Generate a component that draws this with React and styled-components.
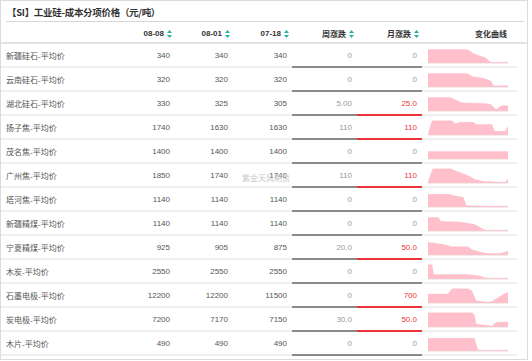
import React from 'react'
import styled, { createGlobalStyle } from 'styled-components'

const GlobalStyle = createGlobalStyle`
  body {
    margin: 0;
    background: #fff;
    font-family: "Liberation Sans", "Noto Sans CJK SC", sans-serif;
  }
`

const COLS = '119px 55px 58px 59px 65px 65px 95px'

const rows = [
  { name: '新疆硅石-平均价', a: '340', b: '340', c: '340', w: '0', m: '0', up: false,
    curve: [[0, .9], [.49, .9], [.58, .6], [.72, .35], [.78, .05], [1, .05]] },
  { name: '云南硅石-平均价', a: '320', b: '320', c: '320', w: '0', m: '0', up: false,
    curve: [[0, .9], [.49, .9], [.55, .7], [.68, .6], [.78, .42], [.82, .08], [1, .08]] },
  { name: '湖北硅石-平均价', a: '330', b: '325', c: '305', w: '5.00', m: '25.0', up: true,
    curve: [[0, .9], [.28, .9], [.42, .55], [.7, .5], [.78, .45], [.85, .1], [.92, .35], [1, .35]] },
  { name: '扬子焦-平均价', a: '1740', b: '1630', c: '1630', w: '110', m: '110', up: true,
    curve: [[0, .05], [.05, .95], [.3, .95], [.34, .75], [.4, .85], [.57, .85], [.6, .7], [.8, .7], [.83, .25], [.97, .25], [1, .6]] },
  { name: '茂名焦-平均价', a: '1400', b: '1400', c: '1400', w: '0', m: '0', up: false,
    curve: [[0, .5], [1, .5]] },
  { name: '广州焦-平均价', a: '1850', b: '1740', c: '1740', w: '110', m: '110', up: true,
    curve: [[0, .05], [.06, .95], [.28, .95], [.35, .8], [.5, .5], [.58, .25], [.7, .1], [.97, .05], [1, .3]] },
  { name: '塔河焦-平均价', a: '1140', b: '1140', c: '1140', w: '0', m: '0', up: false,
    curve: [[0, .85], [.27, .85], [.33, .75], [.44, .65], [.48, .08], [1, .05]] },
  { name: '新疆精煤-平均价', a: '1140', b: '1140', c: '1140', w: '0', m: '0', up: false,
    curve: [[0, .9], [.13, .9], [.16, .65], [.4, .6], [.58, .45], [.68, .15], [.72, .05], [1, .05]] },
  { name: '宁夏精煤-平均价', a: '925', b: '905', c: '875', w: '20.0', m: '50.0', up: true,
    curve: [[0, .85], [.2, .7], [.3, .55], [.5, .55], [.55, .35], [.65, .2], [.75, .1], [.9, .1], [1, .25]] },
  { name: '木炭-平均价', a: '2550', b: '2550', c: '2550', w: '0', m: '0', up: false,
    curve: [[0, .95], [.05, .95], [.07, .3], [.5, .3], [.65, .2], [.7, .1], [.75, .05], [1, .05]] },
  { name: '石墨电极-平均价', a: '12200', b: '12200', c: '11500', w: '0', m: '700', up: true,
    curve: [[0, .6], [.25, .6], [.3, .95], [.5, .95], [.55, .8], [.6, .15], [.75, .05], [.8, .1], [.95, .6], [1, .7]] },
  { name: '炭电极-平均价', a: '7200', b: '7170', c: '7150', w: '30.0', m: '50.0', up: true,
    curve: [[0, .95], [.55, .95], [.58, .8], [.6, .2], [.75, .1], [.8, .05], [.85, .3], [1, .35]] },
  { name: '木片-平均价', a: '490', b: '490', c: '490', w: '0', m: '0', up: false,
    curve: [[0, .85], [.58, .85], [.62, .1], [.65, .05], [1, .05]] },
]

function SortIcon() {
  return (
    <svg width="5" height="8" viewBox="0 0 5 8">
      <path d="M2.5 0 L5 3 L0 3 Z" fill="#27b3a3" />
      <path d="M2.5 8 L5 5 L0 5 Z" fill="#27b3a3" />
    </svg>
  )
}

function Spark({ points }) {
  const W = 80, H = 15
  const pts = points.map(([x, y]) => `${(x * W).toFixed(1)},${(H - y * H).toFixed(1)}`)
  const area = `0,${H} ${pts.join(' ')} ${W},${H}`
  return (
    <svg width={W} height={H + 1} viewBox={`0 0 ${W} ${H + 1}`}>
      <polygon points={area} fill="#ffc0cb" />
      <polyline points={pts.join(' ')} fill="none" stroke="#fbb3c0" strokeWidth="0.6" strokeDasharray="1 1" />
      <line x1="0" y1={H + 0.5} x2={W} y2={H + 0.5} stroke="#eee" strokeWidth="1" />
    </svg>
  )
}

function App() {
  return (
    <>
      <GlobalStyle />
      <Frame>
        <Title>【SI】工业硅-成本分项价格（元/吨）</Title>
        <HeaderRow>
          <HeadCell />
          <HeadCell $right>08-08<SortIcon /></HeadCell>
          <HeadCell $right>08-01<SortIcon /></HeadCell>
          <HeadCell $right>07-18<SortIcon /></HeadCell>
          <HeadCell $right>周涨跌<SortIcon /></HeadCell>
          <HeadCell $right>月涨跌<SortIcon /></HeadCell>
          <HeadCell $right $pad={10}>变化曲线</HeadCell>
        </HeaderRow>
        {rows.map(r => (
          <Row key={r.name}>
            <NameCell>{r.name}</NameCell>
            <NumCell>{r.a}</NumCell>
            <NumCell>{r.b}</NumCell>
            <NumCell>{r.c}</NumCell>
            <ChangeCell $bar="#8a8a8a">{r.w}</ChangeCell>
            <ChangeCell $bar={r.up ? '#e8363c' : '#8a8a8a'} $red={r.up}>{r.m}</ChangeCell>
            <ChartCell><Spark points={r.curve} /></ChartCell>
          </Row>
        ))}
        <Watermark>紫金天风期货</Watermark>
      </Frame>
    </>
  )
}

const Frame = styled.div`
  position: relative;
  width: 528px;
  height: 360px;
  box-sizing: border-box;
  border: 1px solid #dcdcdc;
  overflow: hidden;
`

const Title = styled.div`
  margin: 0 3px 0 5px;
  padding: 3px 0 0 1px;
  height: 17px;
  line-height: 17px;
  border-bottom: 1px solid #d6d6d6;
  font-family: "Noto Sans CJK SC", sans-serif;
  font-size: 9.5px;
  font-weight: 700;
  color: #333;
  letter-spacing: -0.3px;
`

const HeaderRow = styled.div`
  display: grid;
  grid-template-columns: ${COLS};
  height: 20px;
  border-bottom: 2px solid #e2e2e2;
`

const HeadCell = styled.div`
  display: flex;
  align-items: center;
  justify-content: ${p => (p.$right ? 'flex-end' : 'flex-start')};
  gap: 3px;
  padding-right: ${p => p.$pad || 3}px;
  padding-top: 2px;
  font-size: 8px;
  font-weight: 700;
  color: #333;
  svg {
    margin-top: 2px;
  }
`

const Row = styled.div`
  display: grid;
  grid-template-columns: ${COLS};
  height: 24px;
`

const Cell = styled.div`
  display: flex;
  align-items: center;
  box-sizing: border-box;
  height: 24px;
  border-bottom: 2px solid #f0f0f0;
  font-size: 8px;
  color: #555;
`

const NameCell = styled(Cell)`
  padding-left: 5px;
  color: #555;
`

const NumCell = styled(Cell)`
  justify-content: flex-end;
  padding-right: 5px;
`

const ChangeCell = styled(Cell)`
  justify-content: flex-end;
  padding-right: 5px;
  border-bottom-color: ${p => p.$bar};
  color: ${p => (p.$red ? '#e8363c' : '#9a9a9a')};
`

const ChartCell = styled(Cell)`
  align-items: flex-start;
  padding: 4px 0 0 6px;
`

const Watermark = styled.div`
  position: absolute;
  left: 241px;
  top: 171px;
  font-family: "Noto Sans CJK SC", sans-serif;
  font-size: 8px;
  color: #c8c8c8;
  pointer-events: none;
`

export default App
